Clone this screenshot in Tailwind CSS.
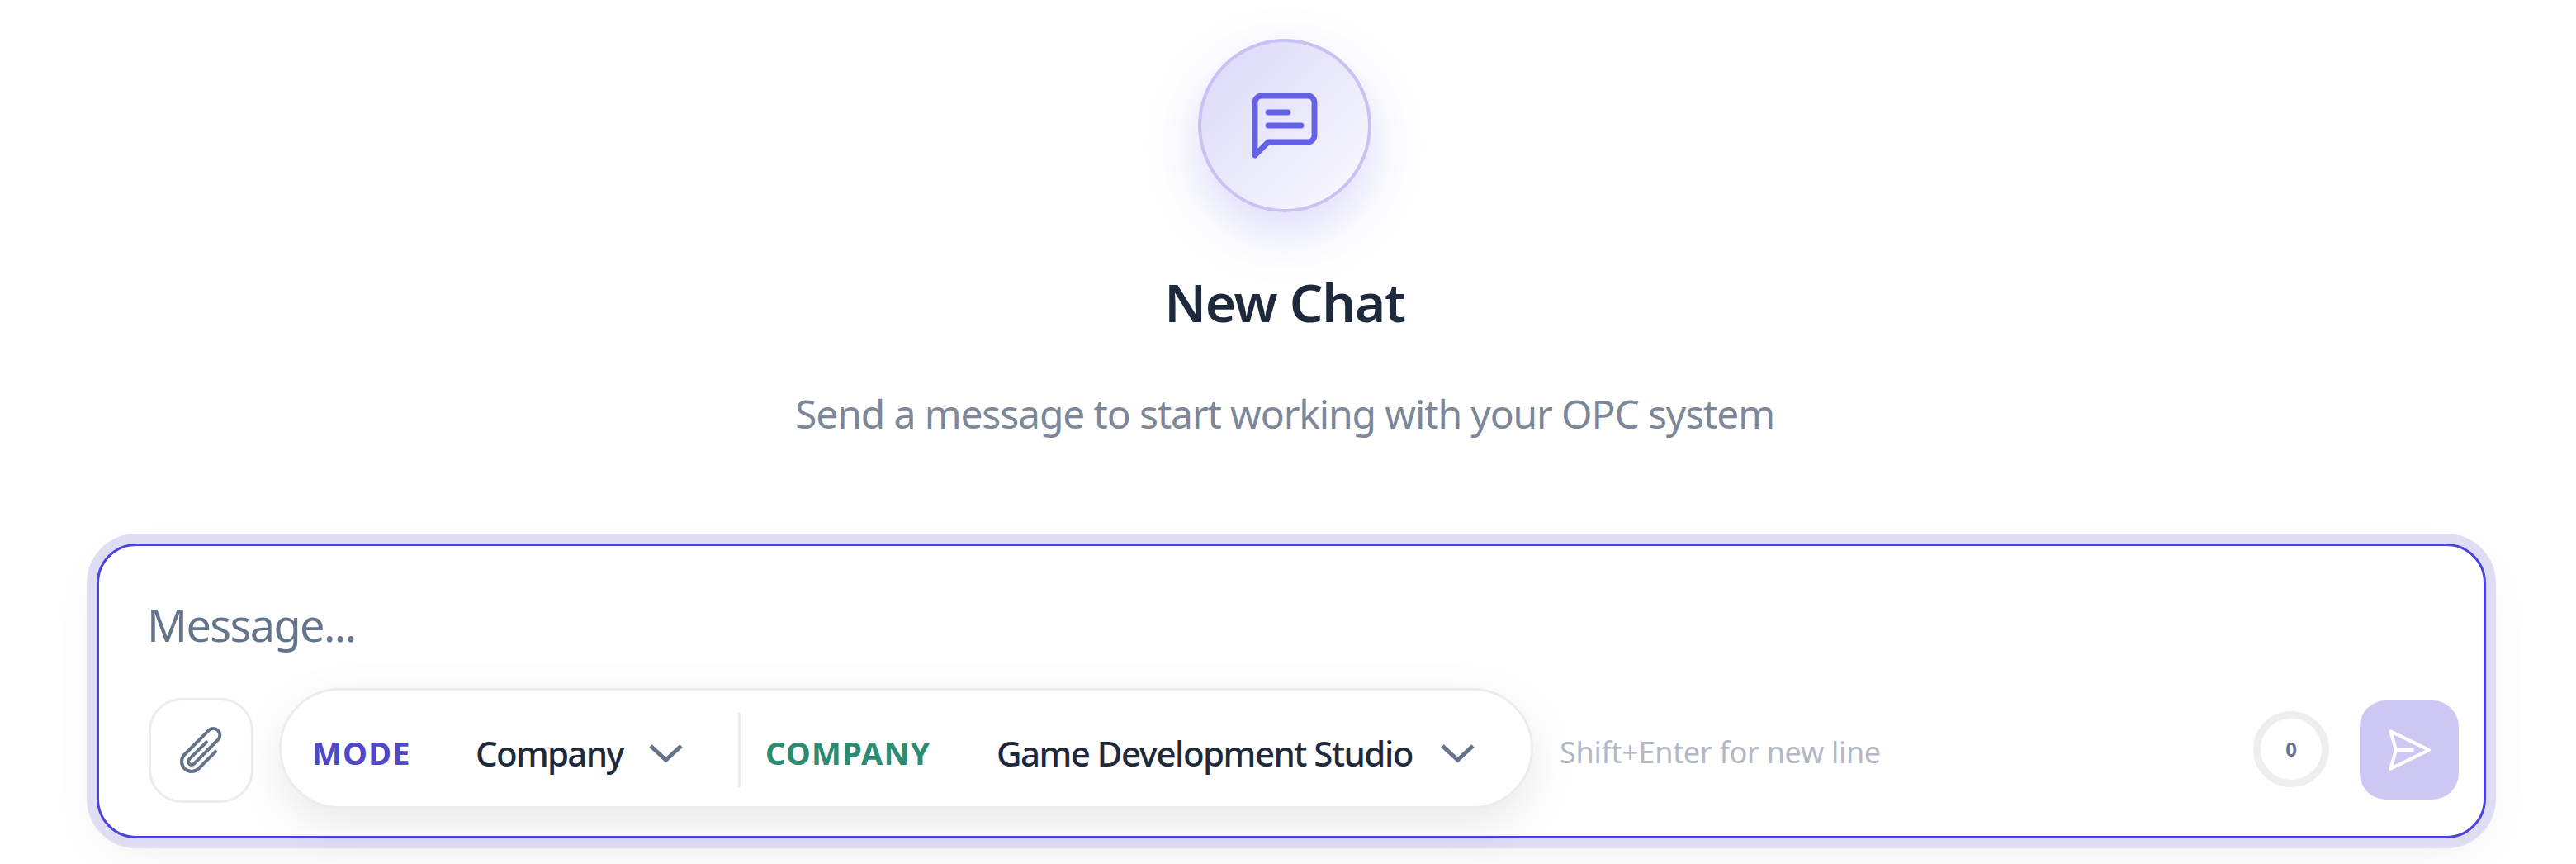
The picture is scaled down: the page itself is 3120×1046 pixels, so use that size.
<!DOCTYPE html>
<html lang="en">
<head>
<meta charset="utf-8">
<title>New Chat</title>
<script src="https://cdn.jsdelivr.net/npm/@tailwindcss/browser@4"></script>
</head>
<body class="bg-white overflow-hidden font-['Noto_Sans','Open_Sans',sans-serif]">
<div class="w-[3120px] h-[1046px] overflow-hidden">
  <div class="w-[3112px] flex flex-col items-center pt-[47px]">
    <div class="w-[210px] h-[210px] rounded-full border-4 border-[#c6c3f3] bg-linear-to-br from-[#dad8f8] to-[#fafafe] shadow-[0_24px_64px_rgba(99,102,241,0.24)] flex items-center justify-center">
      <svg class="w-[96px] h-[96px]" viewBox="0 0 24 24" fill="none" stroke="#6561e6" stroke-width="1.7" stroke-linecap="round" stroke-linejoin="round"><path d="M21 15a2 2 0 0 1-2 2H7l-4 4V5a2 2 0 0 1 2-2h14a2 2 0 0 1 2 2z"/><path d="M7 8h6"/><path d="M7 12h10"/></svg>
    </div>
    <h1 class="mt-[64px] text-[64px] leading-[90px] font-semibold text-[#1e293b] tracking-[-1.3px]">New Chat</h1>
    <p class="mt-[58px] text-[48px] leading-[64px] text-[#7c8799] tracking-[-1.13px]">Send a message to start working with your OPC system</p>
  </div>
  <div class="ml-[117px] mt-[125px] w-[2894px] h-[357px] rounded-[48px] border-[3px] border-[#4a43dc] bg-white shadow-[0_0_0_12px_#dfddf4,0_20px_56px_rgba(0,0,0,0.06)] pl-[60px] pr-[30px] pt-[55px] flex flex-col">
    <div class="-ml-[2px] h-[80px] leading-[80px] text-[54px] text-[#64748b] tracking-[-1.6px]">Message...</div>
    <div class="mt-[39px] flex items-center h-[146px]">
      <button class="w-[127px] h-[127px] rounded-[40px] border-[3px] border-[#ececec] flex items-center justify-center shrink-0">
        <svg class="w-[64px] h-[64px]" viewBox="0 0 24 24" fill="none" stroke="#64748b" stroke-width="1.5" stroke-linecap="round" stroke-linejoin="round"><path d="m18.375 12.739-7.693 7.693a4.5 4.5 0 0 1-6.364-6.364l10.94-10.94A3 3 0 1 1 19.5 7.372L8.552 18.32m.009-.01-.01.01m5.699-9.941-7.81 7.81a1.5 1.5 0 0 0 2.112 2.13"/></svg>
      </button>
      <div class="mb-[4px] ml-[31px] h-[146px] w-[1519px] rounded-[73px] border-[3px] border-[#ececec] bg-white shadow-[0_20px_60px_rgba(0,0,0,0.09)] flex items-center pl-[37px] shrink-0">
        <span class="mt-[10px] text-[38px] font-bold text-[#5048c8] tracking-[1.2px] w-[118px] whitespace-nowrap">MODE</span>
        <span class="mt-[10px] ml-[80px] text-[42px] text-[#1e293b] font-medium tracking-[-1.7px] w-[177px] whitespace-nowrap">Company</span>
        <svg class="ml-[33px] mt-[13px] shrink-0" width="41" height="24" viewBox="0 0 41 24" fill="none" stroke="#64748b" stroke-width="5"><path d="M2 2 20.500 19 39 2"/></svg>
        <div class="mt-[4px] ml-[67px] w-[3px] h-[90px] bg-[#ececec] shrink-0"></div>
        <span class="mt-[10px] ml-[30px] text-[38px] font-bold text-[#2a8c72] tracking-[1.2px] w-[203px] whitespace-nowrap">COMPANY</span>
        <span class="mt-[10px] ml-[77px] text-[42px] text-[#1e293b] font-medium tracking-[-1.5px] w-[503px] whitespace-nowrap">Game Development Studio</span>
        <svg class="ml-[35px] mt-[13px] shrink-0" width="41" height="24" viewBox="0 0 41 24" fill="none" stroke="#64748b" stroke-width="5"><path d="M2 2 20.500 19 39 2"/></svg>
      </div>
      <span class="mt-[6px] ml-[32px] text-[36px] text-[#b2b8c4] whitespace-nowrap tracking-[-0.3px]">Shift+Enter for new line</span>
      <div class="mb-[2px] ml-auto w-[92px] h-[92px] rounded-full border-[9px] border-[#eeeeee] flex items-center justify-center shrink-0">
        <span class="text-[24px] font-bold text-[#64748b]">0</span>
      </div>
      <button class="ml-[37px] w-[120px] h-[120px] rounded-[32px] bg-[#ccc8f3] flex items-center justify-center shrink-0">
        <svg class="w-[64px] h-[64px]" viewBox="0 0 24 24" fill="none" stroke="#ffffff" stroke-width="1.5" stroke-linecap="round" stroke-linejoin="round"><path d="M6 12 3.500 3.500 21 12 3.500 20.500z"/><path d="M6 12h7.500"/></svg>
      </button>
    </div>
  </div>
</div>
</body>
</html>
